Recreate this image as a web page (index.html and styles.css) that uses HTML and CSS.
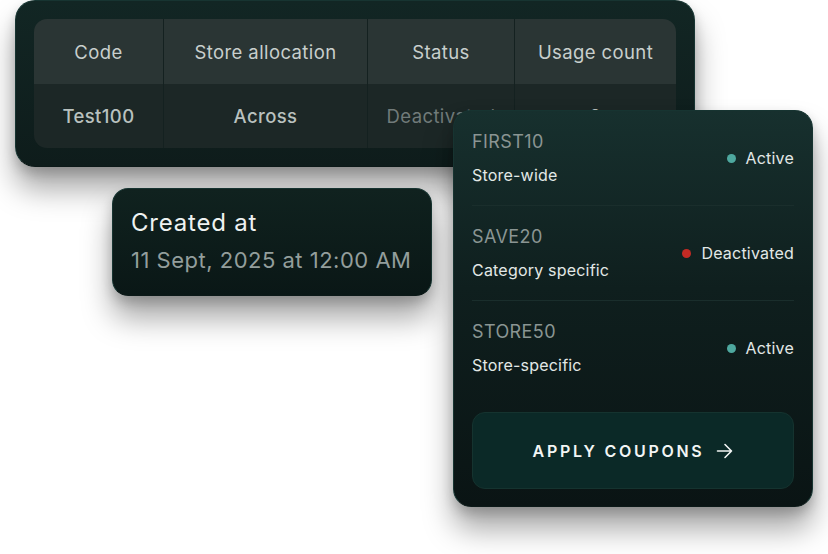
FILE: index.html
```html
<!DOCTYPE html>
<html lang="en">
<head>
    <meta charset="UTF-8">
    <meta name="viewport" content="width=device-width, initial-scale=1.0">
    <title>Coupons</title>
    <link rel="stylesheet" href="styles.css">
</head>
<body>

<div class="canvas">

    <!-- Coupon table -->
    <div class="card table-card">
        <div class="coupon-table">
            <div class="cell head">Code</div>
            <div class="cell head">Store allocation</div>
            <div class="cell head">Status</div>
            <div class="cell head">Usage count</div>
            <div class="cell body">Test100</div>
            <div class="cell body">Across</div>
            <div class="cell body dim">Deactivated</div>
            <div class="cell body">0</div>
        </div>
    </div>

    <!-- Created at -->
    <div class="card created-card">
        <div class="created-title">Created at</div>
        <div class="created-date">11 Sept, 2025 at 12:00 AM</div>
    </div>

    <!-- Coupon list -->
    <div class="card coupon-card">
        <div class="coupon-row">
            <div class="coupon-info">
                <div class="coupon-code">FIRST10</div>
                <div class="coupon-scope">Store-wide</div>
            </div>
            <div class="coupon-status"><span class="dot active"></span>Active</div>
        </div>
        <div class="coupon-row">
            <div class="coupon-info">
                <div class="coupon-code">SAVE20</div>
                <div class="coupon-scope">Category specific</div>
            </div>
            <div class="coupon-status"><span class="dot inactive"></span>Deactivated</div>
        </div>
        <div class="coupon-row">
            <div class="coupon-info">
                <div class="coupon-code">STORE50</div>
                <div class="coupon-scope">Store-specific</div>
            </div>
            <div class="coupon-status"><span class="dot active"></span>Active</div>
        </div>
        <button class="apply-btn">
            APPLY COUPONS
            <svg width="17" height="16" viewBox="0 0 17 16" fill="none" stroke="#f2f5f4" stroke-width="1.6" stroke-linecap="round" stroke-linejoin="round">
                <path d="M1.5 8h14M9 1.5L15.5 8 9 14.5"/>
            </svg>
        </button>
    </div>

</div>

</body>
</html>
```

FILE: styles.css
```css
/* Floating coupon cards */
* {
    box-sizing: border-box;
}

body {
    margin: 0;
    background: #fff;
    font-family: Inter, "Noto Sans", sans-serif;
}

.canvas {
    position: relative;
    width: 828px;
    height: 554px;
    overflow: hidden;
}

.card {
    position: absolute;
    border: 1px solid #173431;
    border-bottom-color: #0c1918;
    box-shadow: 0 22px 30px rgba(0, 0, 0, 0.35), 0 6px 12px rgba(0, 0, 0, 0.18);
}

/* Table card */
.table-card {
    left: 15px;
    top: 0;
    width: 680px;
    height: 167px;
    padding: 18px;
    border-radius: 20px;
    background: linear-gradient(180deg, #122624 0%, #0e1c1b 100%);
}

.coupon-table {
    display: grid;
    grid-template-columns: 129px 204px 147px 162px;
    grid-template-rows: 65px 64px;
    border-radius: 13px;
    overflow: hidden;
}

.cell {
    display: flex;
    align-items: center;
    justify-content: center;
    font-size: 18.5px;
    letter-spacing: 0.4px;
    border-left: 1px solid #142120;
    white-space: nowrap;
}

.cell:nth-child(4n+1) {
    border-left: none;
}

.cell.head {
    background: #2a3534;
    color: #c8cfcd;
}

.cell.body {
    background: #1c2726;
    color: #b9c1bf;
    font-weight: 500;
}

.cell.dim {
    color: #717b7a;
    font-weight: 400;
}

/* Created at card */
.created-card {
    left: 112px;
    top: 188px;
    width: 320px;
    height: 108px;
    padding: 18px 18px 0;
    border-radius: 16px;
    background: linear-gradient(180deg, #10221f 0%, #0a1716 100%);
}

.created-title {
    font-size: 24px;
    line-height: 32px;
    letter-spacing: 0.8px;
    color: #eef2f1;
}

.created-date {
    margin-top: 6px;
    font-size: 22px;
    line-height: 30px;
    letter-spacing: 0.5px;
    color: #939e9c;
}

/* Coupon card */
.coupon-card {
    left: 453px;
    top: 110px;
    width: 360px;
    height: 397px;
    padding: 0 18px 18px;
    border-radius: 18px;
    background: linear-gradient(180deg, #17302e 0%, #0f1f1e 45%, #0a1414 100%);
}

.coupon-row {
    display: flex;
    align-items: center;
    justify-content: space-between;
    height: 95px;
    border-bottom: 1px solid #1a2e2c;
}

.coupon-row:nth-child(3) {
    height: 94px;
    border-bottom: none;
}

.coupon-code {
    font-size: 18px;
    line-height: 22px;
    letter-spacing: 0.4px;
    color: #8a9593;
}

.coupon-scope {
    margin-top: 12px;
    font-size: 16px;
    line-height: 20px;
    letter-spacing: 0.2px;
    color: #e2e8e6;
}

.coupon-status {
    display: flex;
    align-items: center;
    gap: 10px;
    font-size: 16px;
    letter-spacing: 0.2px;
    color: #e2e8e6;
}

.dot {
    width: 9px;
    height: 9px;
    border-radius: 50%;
}

.dot.active {
    background: #4ea89f;
}

.dot.inactive {
    background: #c42a24;
}

.apply-btn {
    display: flex;
    align-items: center;
    justify-content: center;
    gap: 12px;
    width: 100%;
    height: 77px;
    margin-top: 17px;
    border: 1px solid #15332f;
    border-radius: 13px;
    background: #0b2927;
    color: #f2f5f4;
    font-family: Inter, "Noto Sans", sans-serif;
    font-size: 16px;
    font-weight: 600;
    letter-spacing: 2.7px;
    cursor: pointer;
}
```
